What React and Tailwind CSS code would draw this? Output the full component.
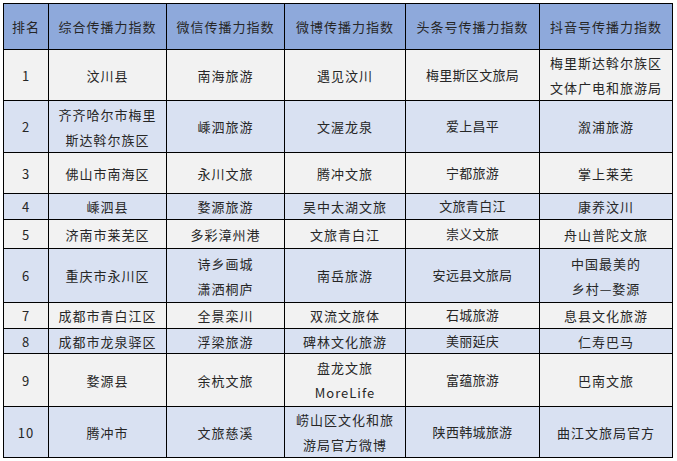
import React from "react";

const headers = ["排名", "综合传播力指数", "微信传播力指数", "微博传播力指数", "头条号传播力指数", "抖音号传播力指数"];

const rows = [
  { h: "h-[50px]", cells: ["1", "汶川县", "南海旅游", "遇见汶川", "梅里斯区文旅局", "梅里斯达斡尔族区\n文体广电和旅游局"] },
  { h: "h-[51px]", cells: ["2", "齐齐哈尔市梅里\n斯达斡尔族区", "嵊泗旅游", "文渥龙泉", "爱上昌平", "溆浦旅游"] },
  { h: "h-[40px]", cells: ["3", "佛山市南海区", "永川文旅", "腾冲文旅", "宁都旅游", "掌上莱芜"] },
  { h: "h-[25px]", cells: ["4", "嵊泗县", "婺源旅游", "吴中太湖文旅", "文旅青白江", "康养汶川"] },
  { h: "h-[28px]", cells: ["5", "济南市莱芜区", "多彩漳州港", "文旅青白江", "崇义文旅", "舟山普陀文旅"] },
  { h: "h-[53px]", cells: ["6", "重庆市永川区", "诗乡画城\n潇洒桐庐", "南岳旅游", "安远县文旅局", "中国最美的\n乡村—婺源"] },
  { h: "h-[25px]", cells: ["7", "成都市青白江区", "全景栾川", "双流文旅体", "石城旅游", "息县文化旅游"] },
  { h: "h-[24px]", cells: ["8", "成都市龙泉驿区", "浮梁旅游", "碑林文化旅游", "美丽延庆", "仁寿巴马"] },
  { h: "h-[52px]", cells: ["9", "婺源县", "余杭文旅", "盘龙文旅\nMoreLife", "富蕴旅游", "巴南文旅"] },
  { h: "h-[50px]", cells: ["10", "腾冲市", "文旅慈溪", "崂山区文化和旅\n游局官方微博", "陕西韩城旅游", "曲江文旅局官方"] },
];

const Cell = ({ text, bg, h, small }) => (
  <div
    className={`${bg} ${h} flex flex-col items-center justify-center text-center text-[#262626] leading-[25px] ${
      small ? "text-[13px] tracking-[0.3px] pb-[2px]" : "text-[13px] tracking-[1px]"
    }`}
  >
    {text.split("\n").map((line, i) => (
      <span key={i}>{line}</span>
    ))}
  </div>
);

export default function App() {
  return (
    <div className="bg-white w-[677px] h-[461px] pt-[3px] pl-[3px] font-['Noto_Sans_CJK_SC','Noto_Sans',sans-serif]">
      <div className="inline-grid grid-cols-[44px_117px_117px_120px_133px_132px] gap-px bg-black p-px">
        {headers.map((t) => (
          <div
            key={t}
            className="bg-[#8ea9db] h-[45px] flex items-center justify-center text-[13px] tracking-[1px] text-[#262626]"
          >
            {t}
          </div>
        ))}
        {rows.map((r, i) =>
          r.cells.map((c, j) => (
            <Cell
              key={`${i}-${j}`}
              text={c}
              h={r.h}
              bg={i % 2 === 0 ? "bg-[#f2f2f2]" : "bg-[#d9e1f2]"}
              small={j === 4}
            />
          ))
        )}
      </div>
    </div>
  );
}
